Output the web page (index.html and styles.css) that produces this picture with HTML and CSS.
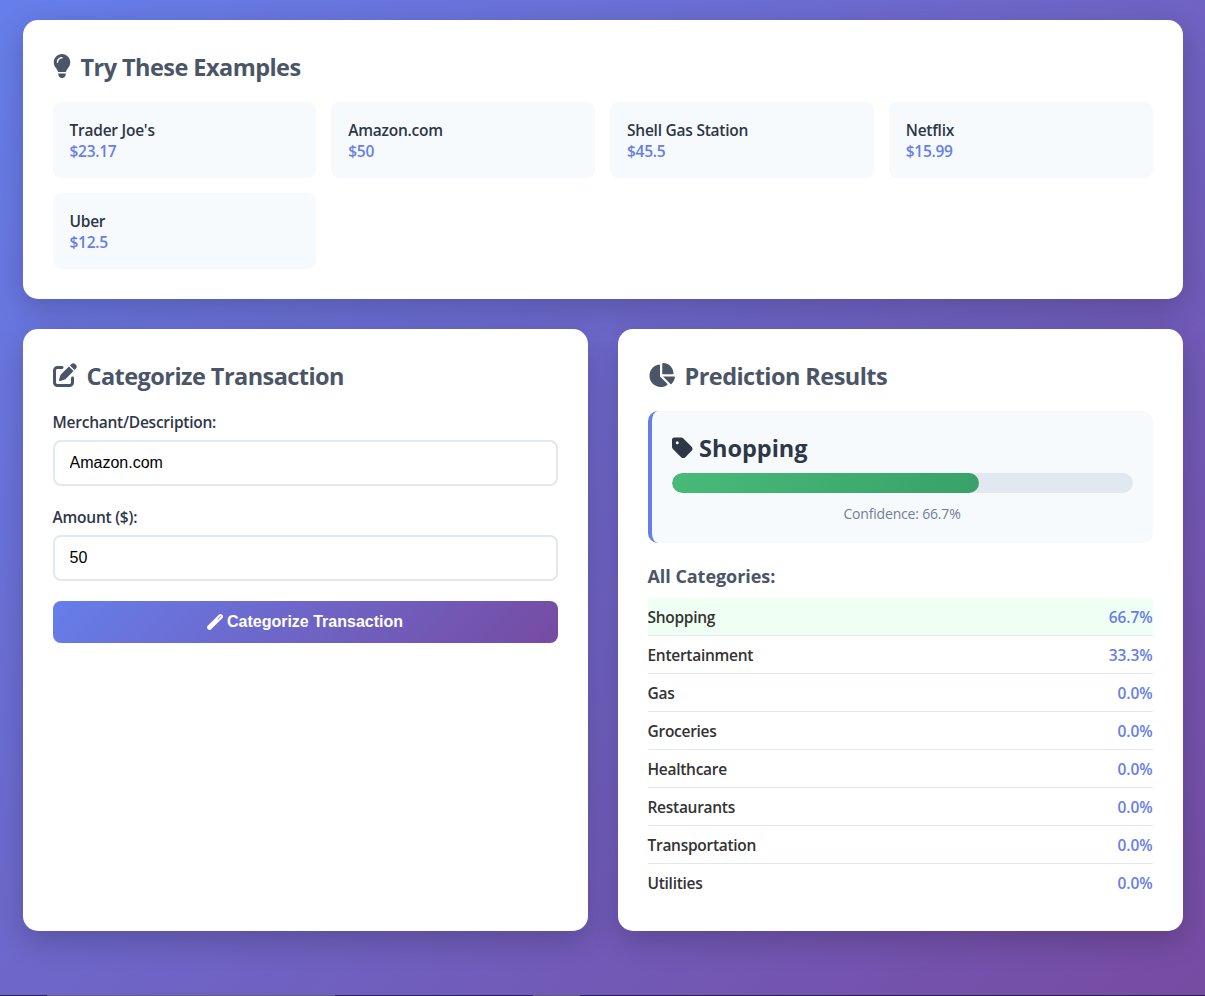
FILE: index.html
```html
<!DOCTYPE html>
<html lang="en">
<head>
<meta charset="utf-8">
<title>Transaction Categorizer</title>
<link rel="stylesheet" href="styles.css">
</head>
<body>
<main class="container">
  <section class="card">
    <h2 class="heading heading-examples"><svg class="icon icon-bulb" viewBox="0 0 384 512"><path d="M272 384c9.6-31.9 29.5-59.1 49.2-86.2c5.2-7.1 10.4-14.2 15.4-21.4c19.8-28.5 31.4-63 31.4-100.3C368 78.8 289.2 0 192 0S16 78.8 16 176c0 37.3 11.6 71.9 31.4 100.3c5 7.2 10.2 14.3 15.4 21.4c19.8 27.1 39.7 54.4 49.2 86.2l160 0zM192 512c44.2 0 80-35.8 80-80l0-16-160 0 0 16c0 44.2 35.8 80 80 80zM112 176c0 8.8-7.2 16-16 16s-16-7.2-16-16c0-61.9 50.1-112 112-112c8.8 0 16 7.2 16 16s-7.2 16-16 16c-44.2 0-80 35.8-80 80z"/></svg><span>Try These Examples</span></h2>
    <div class="examples">
      <div class="example"><div class="merchant">Trader Joe's</div><div class="amount">$23.17</div></div>
      <div class="example"><div class="merchant">Amazon.com</div><div class="amount">$50</div></div>
      <div class="example"><div class="merchant">Shell Gas Station</div><div class="amount">$45.5</div></div>
      <div class="example"><div class="merchant">Netflix</div><div class="amount">$15.99</div></div>
      <div class="example"><div class="merchant">Uber</div><div class="amount">$12.5</div></div>
    </div>
  </section>
  <div class="columns">
    <section class="card">
      <h2 class="heading heading-form"><svg class="icon icon-edit" viewBox="0 0 512 512"><path d="M471.6 21.7c-21.9-21.9-57.3-21.9-79.2 0L362.3 51.7l97.9 97.9 30.1-30.1c21.9-21.9 21.9-57.3 0-79.2L471.6 21.7zm-299.2 220c-6.1 6.1-10.8 13.6-13.5 21.9l-29.6 88.8c-2.9 8.6-.6 18.1 5.8 24.6s15.9 8.7 24.6 5.8l88.8-29.6c8.2-2.7 15.7-7.4 21.9-13.5L437.7 172.3 339.7 74.3 172.4 241.7zM96 64C43 64 0 107 0 160L0 416c0 53 43 96 96 96l256 0c53 0 96-43 96-96l0-96c0-17.7-14.3-32-32-32s-32 14.3-32 32l0 96c0 17.7-14.3 32-32 32L96 448c-17.7 0-32-14.3-32-32l0-256c0-17.7 14.3-32 32-32l96 0c17.7 0 32-14.3 32-32s-14.3-32-32-32L96 64z"/></svg><span>Categorize Transaction</span></h2>
      <form>
        <div class="field">
          <label class="label" for="merchant">Merchant/Description:</label>
          <input class="input" id="merchant" type="text" value="Amazon.com">
        </div>
        <div class="field">
          <label class="label" for="amount">Amount ($):</label>
          <input class="input" id="amount" type="text" value="50">
        </div>
        <button class="button" type="button"><svg class="icon icon-wand" viewBox="0 0 512 512"><path d="M14.1 463.3c-18.7-18.7-18.7-49.1 0-67.9L395.4 14.1c18.7-18.7 49.1-18.7 67.9 0l34.6 34.6c18.7 18.7 18.7 49.1 0 67.9L116.5 497.9c-18.7 18.7-49.1 18.7-67.9 0L14.1 463.3zM347.6 187.6l105-105L429.4 59.3l-105 105 23.3 23.3z"/></svg><span>Categorize Transaction</span></button>
      </form>
    </section>
    <section class="card">
      <h2 class="heading heading-results"><svg class="icon icon-pie" viewBox="0 0 576 512"><path d="M304 240l0-223.4c0-9 7-16.6 16-16.6C443.7 0 544 100.3 544 224c0 9-7.6 16-16.6 16L304 240zM32 272C32 150.7 122.1 50.3 239 34.3c9.2-1.3 17 6.1 17 15.4L256 288 412.5 444.5c6.7 6.7 6.2 17.7-1.5 23.1C371.8 495.6 323.8 512 272 512C139.5 512 32 404.6 32 272zm526.4 16c9.3 0 16.6 7.8 15.4 17c-7.7 55.9-34.6 105.6-73.9 142.3c-6 5.6-15.4 5.2-21.2-.7L320 288l238.4 0z"/></svg><span>Prediction Results</span></h2>
      <div class="result">
        <div class="prediction"><svg class="icon icon-tag" viewBox="0 0 448 512"><path d="M0 80L0 229.5c0 17 6.7 33.3 18.7 45.3l176 176c25 25 65.5 25 90.5 0L418.7 317.3c25-25 25-65.5 0-90.5l-176-176c-12-12-28.3-18.7-45.3-18.7L48 32C21.5 32 0 53.5 0 80zm112 32a32 32 0 1 1 0 64 32 32 0 1 1 0-64z"/></svg><span>Shopping</span></div>
        <div class="bar"><div class="bar-fill" style="width: 66.7%"></div></div>
        <div class="confidence">Confidence: 66.7%</div>
      </div>
      <h3 class="subheading">All Categories:</h3>
      <div class="row row-top"><span>Shopping</span><span class="percent">66.7%</span></div>
      <div class="row"><span>Entertainment</span><span class="percent">33.3%</span></div>
      <div class="row"><span>Gas</span><span class="percent">0.0%</span></div>
      <div class="row"><span>Groceries</span><span class="percent">0.0%</span></div>
      <div class="row"><span>Healthcare</span><span class="percent">0.0%</span></div>
      <div class="row"><span>Restaurants</span><span class="percent">0.0%</span></div>
      <div class="row"><span>Transportation</span><span class="percent">0.0%</span></div>
      <div class="row"><span>Utilities</span><span class="percent">0.0%</span></div>
    </section>
  </div>
</main>
<div class="edge"></div>
</body>
</html>
```
FILE: styles.css
```css
* { margin: 0; padding: 0; box-sizing: border-box; }

body {
  display: flex;
  flex-direction: column;
  height: 996px;
  overflow: hidden;
  background: linear-gradient(135deg, #667eea 0%, #764ba2 100%);
  color: #333;
  font-family: "Open Sans", "Noto Sans", sans-serif;
  font-size: 15.5px;
  font-weight: 600;
  letter-spacing: -0.28px;
  line-height: 21px;
}

.container { width: 1200px; margin: 0 auto; padding: 20px; flex: 1; }

.card {
  padding: 30px;
  border-radius: 15px;
  background: #fff;
  box-shadow: 0 10px 30px rgba(0, 0, 0, 0.2);
}

.icon { display: block; flex: none; fill: currentColor; }

.heading {
  display: flex;
  gap: 10px;
  height: 32px;
  margin-bottom: 20px;
  color: #4a5568;
  font-size: 23.5px;
  font-weight: 700;
  letter-spacing: -0.55px;
  line-height: 34px;
  white-space: nowrap;
}
.heading .icon { height: 24px; margin-top: 4px; }
.icon-bulb { width: 18px; }
.icon-edit { width: 24px; }
.icon-pie { width: 27px; }

.examples { display: grid; grid-template-columns: repeat(4, 1fr); gap: 15px; }
.example {
  padding: 16px 15px 14px;
  border: 2px solid #f7fafc;
  border-radius: 8px;
  background: #f7fafc;
}
.merchant { color: #2d3748; letter-spacing: -0.24px; }
.amount { color: #667eea; letter-spacing: -0.3px; }

.columns { display: grid; grid-template-columns: 1fr 1fr; gap: 30px; margin-top: 30px; }

.field { margin-bottom: 20px; }
.label { display: block; padding-top: 1px; margin-bottom: 7px; color: #2d3748; letter-spacing: -0.24px; }
.input {
  display: block;
  width: 100%;
  height: 46px;
  padding: 12px 15px;
  border: 2px solid #e2e8f0;
  border-radius: 8px;
  background: #fff;
  color: #000;
  font: 16px "Liberation Sans", Arial, sans-serif;
}
.button {
  display: flex;
  align-items: center;
  justify-content: center;
  gap: 4px;
  width: 100%;
  height: 42px;
  border: 0;
  border-radius: 8px;
  background: linear-gradient(135deg, #667eea 0%, #764ba2 100%);
  color: #fff;
  font: bold 16px "Liberation Sans", Arial, sans-serif;
}
.icon-wand { width: 16px; height: 16px; stroke: currentColor; stroke-width: 16px; }

.result {
  margin-bottom: 20px;
  padding: 20px;
  border-left: 4px solid #667eea;
  border-radius: 10px;
  background: #f7fafc;
}
.prediction {
  display: flex;
  gap: 6.5px;
  height: 32px;
  margin-bottom: 10px;
  color: #2d3748;
  font-size: 23.5px;
  font-weight: 700;
  letter-spacing: 0;
  line-height: 34px;
}
.icon-tag { width: 21px; height: 24px; margin-top: 5px; }
.bar { height: 20px; border-radius: 10px; background: #e2e8f0; overflow: hidden; }
.bar-fill { height: 100%; border-radius: 10px; background: linear-gradient(135deg, #48bb78, #38a169); }
.confidence {
  margin-top: 10px;
  color: #718096;
  font-size: 14px;
  font-weight: 400;
  letter-spacing: -0.18px;
  line-height: 22px;
  height: 20px;
  text-align: center;
}

.subheading {
  padding-top: 1px;
  margin-bottom: 9px;
  color: #4a5568;
  font-size: 18px;
  font-weight: 700;
  letter-spacing: -0.05px;
  line-height: 25px;
}
.row {
  display: flex;
  justify-content: space-between;
  padding: 9px 0 7px;
  border-bottom: 1px solid #e2e8f0;
}
.row:last-child { border-bottom: 0; }
.row-top { background: #f0fff4; }
.percent { color: #667eea; letter-spacing: -0.1px; }

.edge {
  height: 1px;
  background: linear-gradient(90deg, #2b2545 47px, #606068 47px 335px, #2b2545 335px 533px, #606068 533px 580px, #2b2545 580px);
}
```
